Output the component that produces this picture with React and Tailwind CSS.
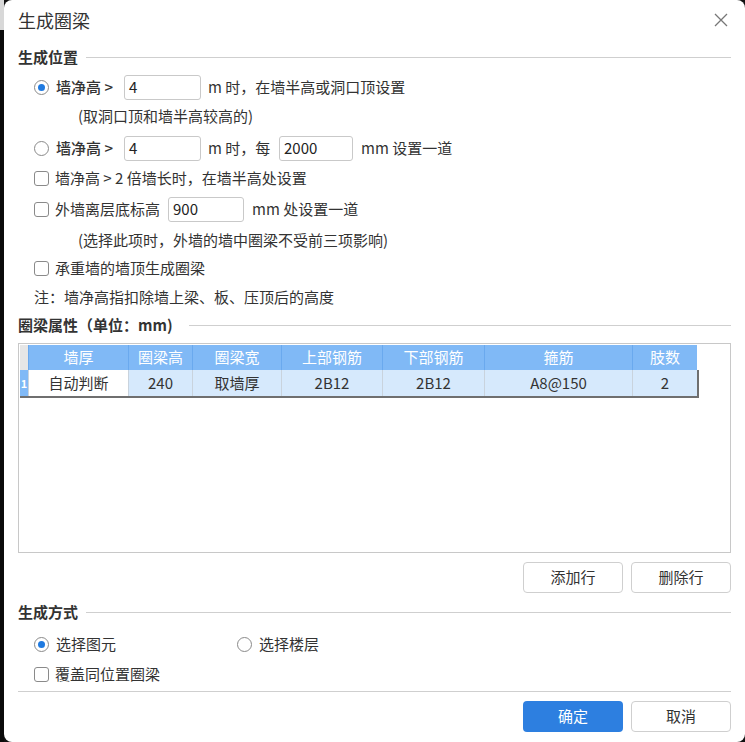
import React from "react";

const FONT = { fontFamily: '"Noto Sans CJK SC", "Noto Sans", sans-serif' };

function Radio({ checked }) {
  return (
    <span className="w-[15px] h-[15px] rounded-full border border-[#8a8a8a] bg-white flex items-center justify-center shrink-0">
      {checked && <span className="w-[7px] h-[7px] rounded-full bg-[#1f7ae0]" />}
    </span>
  );
}

function Check() {
  return <span className="w-[15px] h-[15px] rounded-[3px] border border-[#8a8a8a] bg-white shrink-0" />;
}

function Input({ value, w }) {
  return (
    <span
      className={`h-[25px] border border-[#c9c9c9] rounded-[3px] bg-white flex items-center pl-[4px] text-[15px] text-[#222] ${w}`}
    >
      {value}
    </span>
  );
}

function Section({ title, h, gap }) {
  return (
    <div className={`flex items-center ${gap} ${h}`}>
      <span className="text-[15px] font-bold text-[#333] whitespace-nowrap">{title}</span>
      <div className="flex-1 h-px bg-[#cfcfcf]" />
    </div>
  );
}

function Btn({ children, primary }) {
  return (
    <button
      className={
        primary
          ? "w-[100px] h-[31px] rounded-[4px] bg-[#2d7fe0] text-white text-[15px]"
          : "w-[100px] h-[31px] rounded-[4px] border border-[#cfcfcf] bg-white text-[#333] text-[15px]"
      }
    >
      {children}
    </button>
  );
}

const cols = [
  ["墙厚", "w-[100px]", "自动判断"],
  ["圈梁高", "w-[64px]", "240"],
  ["圈梁宽", "w-[89px]", "取墙厚"],
  ["上部钢筋", "w-[101px]", "2B12"],
  ["下部钢筋", "w-[102px]", "2B12"],
  ["箍筋", "w-[148px]", "A8@150"],
  ["肢数", "w-[65px]", "2"],
];

export default function App() {
  return (
    <div className="flex w-[745px] h-[742px] bg-[#111]" style={FONT}>
      <div className="w-[4px] shrink-0 flex flex-col">
        <div className="h-[30px] bg-[#d8d8d8]" />
        <div className="flex-1 bg-[#0a0a0a]" />
      </div>
      <div className="flex-1 bg-white rounded-lg pl-[14px] pr-[14px] flex flex-col text-[#333] text-[15px]">
        {/* title */}
        <div className="h-[40px] flex items-center justify-between">
          <span className="text-[18px] text-[#333]">生成圈梁</span>
          <svg width="16" height="16" viewBox="0 0 16 16" className="mr-[2px]">
            <path d="M2 2 L14 14 M14 2 L2 14" stroke="#777" strokeWidth="1.3" fill="none" />
          </svg>
        </div>

        <Section title="生成位置" h="h-[34px]" gap="gap-[8px]" />

        <div className="h-[26px] flex items-center pl-[16px]">
          <Radio checked />
          <span className="ml-[7px] w-[68px] font-medium">墙净高 &gt;</span>
          <Input value="4" w="w-[77px]" />
          <span className="ml-[7px]">m 时，在墙半高或洞口顶设置</span>
        </div>
        <div className="h-[32px] flex items-center pl-[60px]">(取洞口顶和墙半高较高的)</div>

        <div className="h-[32px] flex items-center pl-[16px]">
          <Radio />
          <span className="ml-[7px] w-[68px] font-medium">墙净高 &gt;</span>
          <Input value="4" w="w-[77px]" />
          <span className="ml-[7px] w-[71px]">m 时，每</span>
          <Input value="2000" w="w-[74px]" />
          <span className="ml-[8px]">mm 设置一道</span>
        </div>

        <div className="h-[28px] flex items-center pl-[16px]">
          <Check />
          <span className="ml-[6px]">墙净高 &gt; 2 倍墙长时，在墙半高处设置</span>
        </div>

        <div className="h-[34px] flex items-center pl-[16px]">
          <Check />
          <span className="ml-[6px] w-[113px]">外墙离层底标高</span>
          <Input value="900" w="w-[76px]" />
          <span className="ml-[8px]">mm 处设置一道</span>
        </div>

        <div className="h-[28px] flex items-center pl-[60px]">(选择此项时，外墙的墙中圈梁不受前三项影响)</div>

        <div className="h-[28px] flex items-center pl-[16px]">
          <Check />
          <span className="ml-[6px]">承重墙的墙顶生成圈梁</span>
        </div>

        <div className="h-[30px] flex items-center pl-[16px]">注：墙净高指扣除墙上梁、板、压顶后的高度</div>

        <Section title="圈梁属性（单位：mm)" h="h-[26px]" gap="gap-[16px]" />

        {/* table */}
        <div className="mt-[5px] h-[210px] border border-[#c8c8c8] p-[1px]">
          <div className="flex flex-col w-max">
            <div className="flex h-[25px]">
              <div className="w-[8px] bg-[#e6e6e6]" />
              {cols.map(([h, w]) => (
                <div
                  key={h}
                  className={`${w} bg-[#80b9f6] border-l border-[#6aa9ee] text-white text-[15px] flex items-center justify-center`}
                >
                  {h}
                </div>
              ))}
            </div>
            <div className="flex h-[28px] border-b-[2px] border-r-[2px] border-[#6f6f6f]">
              <div className="w-[8px] bg-[#80b9f6] text-white text-[11px] font-bold flex items-center justify-center">1</div>
              {cols.map(([h, w, v], i) => (
                <div
                  key={h}
                  className={`${i === 0 ? "w-[100px] bg-white" : w + " bg-[#d6e9fc]"} ${
                    i === cols.length - 1 ? "w-[63px]" : ""
                  } border-l border-[#c9d3dd] text-[15px] text-[#333] flex items-center justify-center`}
                >
                  {v}
                </div>
              ))}
            </div>
          </div>
        </div>

        <div className="mt-[9px] h-[31px] flex justify-end gap-[8px]">
          <Btn>添加行</Btn>
          <Btn>删除行</Btn>
        </div>

        <Section title="生成方式" h="h-[38px]" gap="gap-[8px]" />

        <div className="h-[26px] flex items-center pl-[16px]">
          <Radio checked />
          <span className="ml-[7px] w-[181px]">选择图元</span>
          <Radio />
          <span className="ml-[7px]">选择楼层</span>
        </div>

        <div className="h-[34px] flex items-center pl-[16px]">
          <Check />
          <span className="ml-[6px]">覆盖同位置圈梁</span>
        </div>

        <div className="h-px bg-[#cfcfcf]" />

        <div className="mt-[9px] flex justify-end gap-[8px]">
          <Btn primary>确定</Btn>
          <Btn>取消</Btn>
        </div>
      </div>
    </div>
  );
}
